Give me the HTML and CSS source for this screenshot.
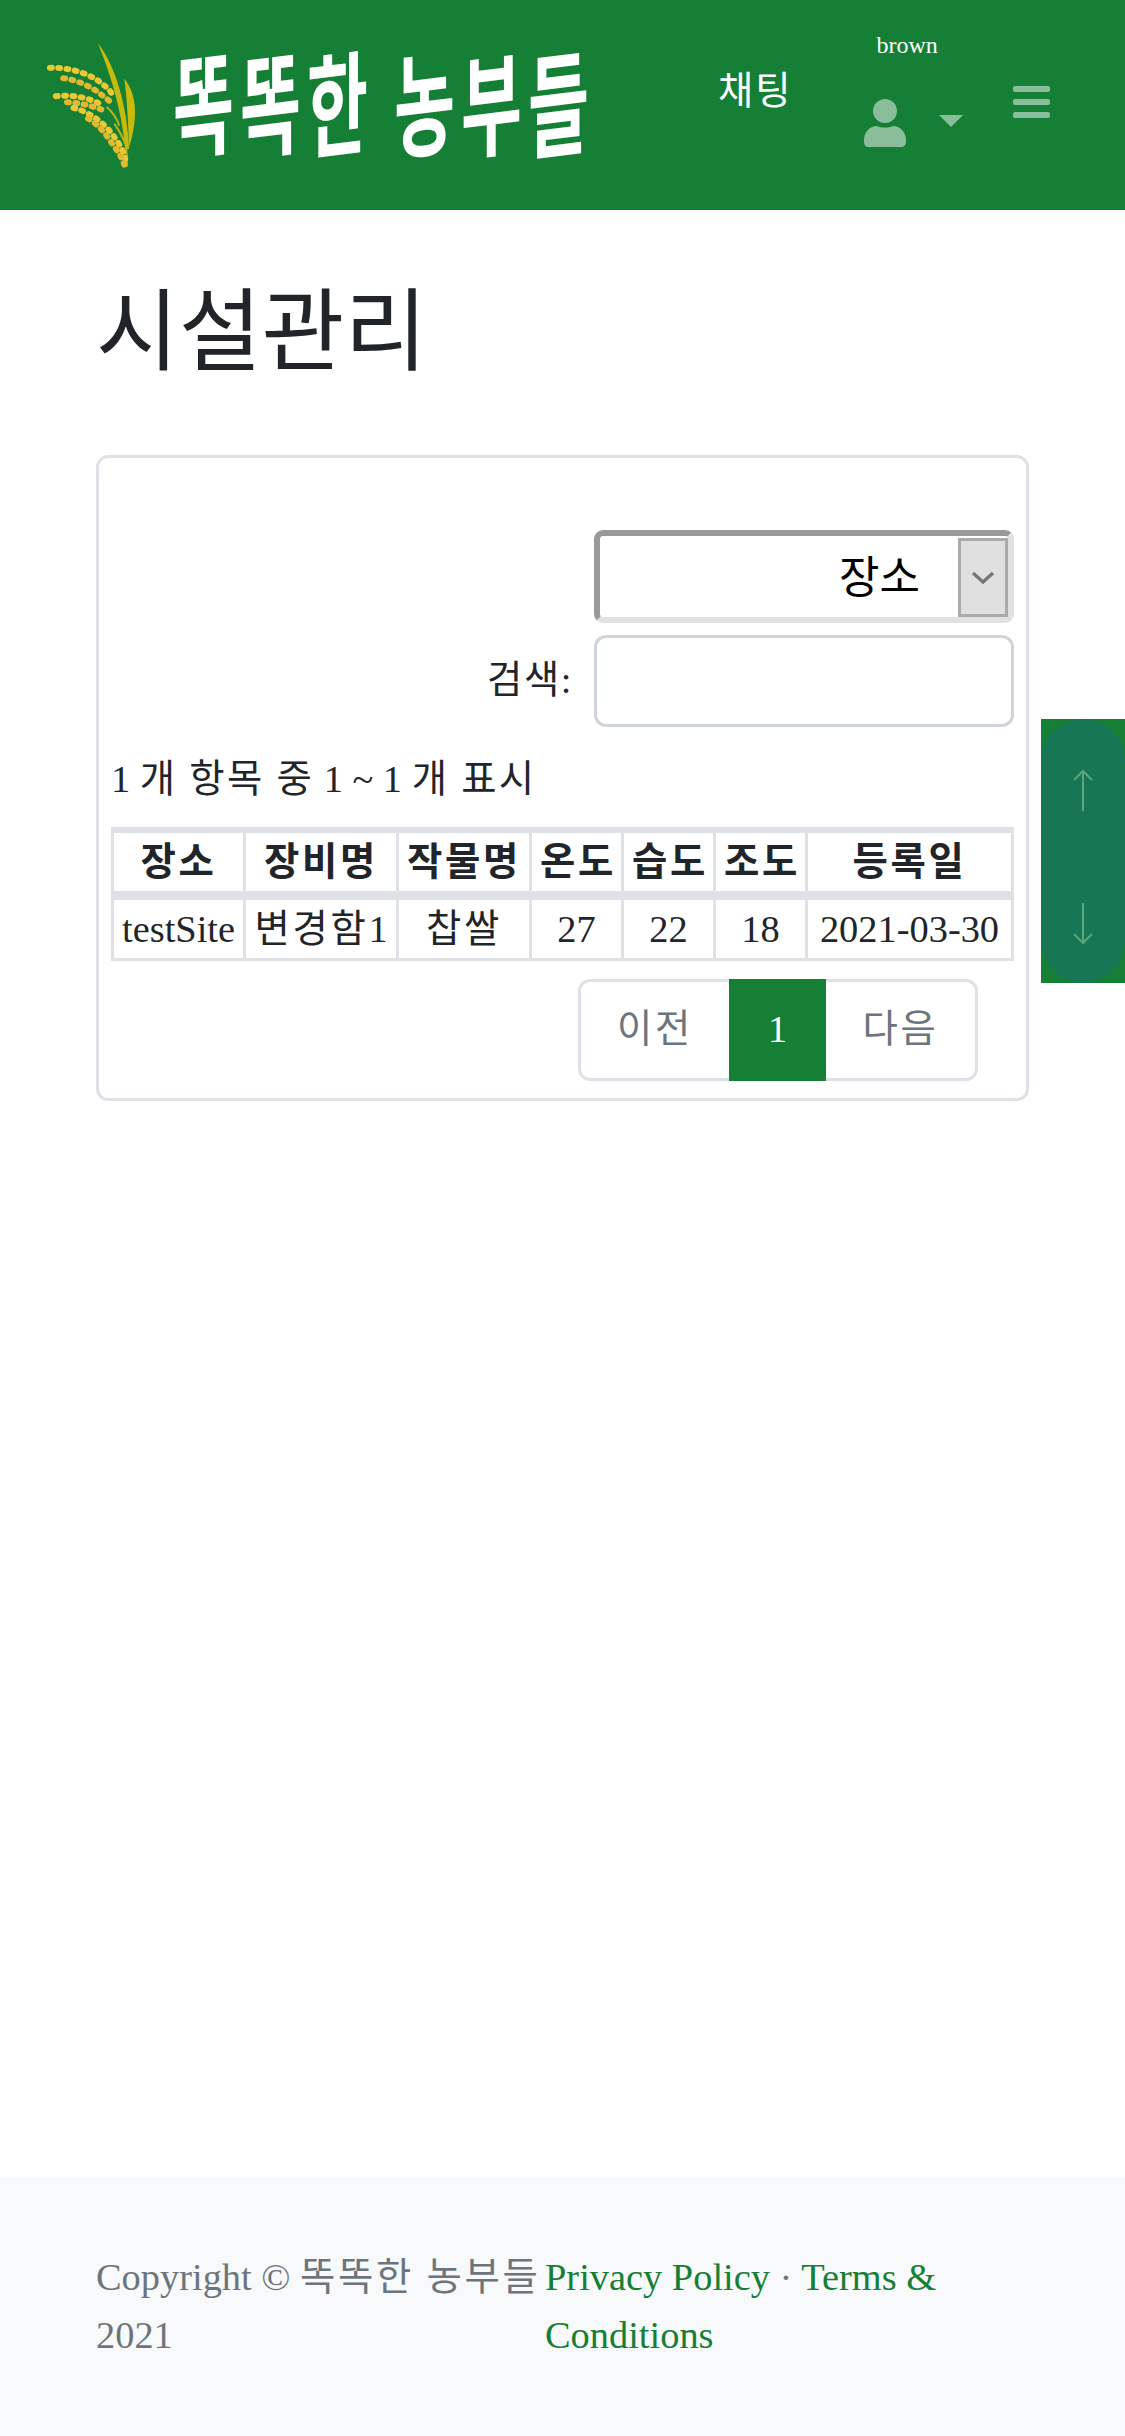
FILE: index.html
```html
<!DOCTYPE html>
<html lang="ko">
<head>
    <meta charset="UTF-8">
    <meta name="viewport" content="width=device-width, initial-scale=1.0">
    <title>시설관리</title>
    <link rel="stylesheet" href="styles.css">
</head>
<body>
    <nav class="navbar">
        <a class="brand" href="#">
            <svg class="brand-plant" width="90" height="128" viewBox="46 41 92 128">
                <path class="leaf" d="M99 42C118 66 129 108 131 150L127 150C123 110 113 76 99 42Z"/>
                <path class="leaf" d="M126 78C134 88 137 100 137 112C137 126 134 138 131 148C130 125 129 100 126 78Z"/>
                <path class="stem" d="M128 147L129 168M116 124C120 130 124 136 127 145M108 107C114 112 118 118 121 126"/>
                <path class="ear" d="M50 67C70 66 94 74 104 84C110 88 113 92 115 97"/>
                <path class="ear alt" d="M58 77C76 78 92 86 102 94C106 97 110 100 113 103"/>
                <path class="ear" d="M56 96C74 94 92 98 105 106"/>
                <path class="ear alt" d="M62 102C76 102 92 105 106 111"/>
                <path class="ear" d="M74 108C92 112 108 126 116 138C122 146 125 152 127 160"/>
                <path class="ear alt" d="M84 116C98 123 106 133 114 145C120 153 123 158 126 166"/>
            </svg>
            <span class="brand-text"><span>똑</span><span>똑</span><span>한</span><span class="gap">농</span><span>부</span><span>들</span></span>
        </a>
        <a class="nav-chat" href="#">채팅</a>
        <div class="nav-user">
            <span class="user-name">brown</span>
            <div class="user-icons">
                <svg class="user-icon" width="42" height="48" viewBox="0 0 42 48">
                    <circle cx="21" cy="12" r="12"/>
                    <path d="M0 41C0 33 6 27 13 27C18 29 24 29 29 27C36 27 42 33 42 41V43C42 46 40 48 37 48H5C2 48 0 46 0 43Z"/>
                </svg>
                <span class="caret"></span>
            </div>
        </div>
        <button class="nav-toggle"><span></span><span></span><span></span></button>
    </nav>

    <main class="content">
        <h1>시설관리</h1>
        <div class="card">
            <div class="filter-row">
                <div class="fake-select">
                    <span class="select-value">장소</span>
                    <span class="select-btn">
                        <svg width="26" height="16" viewBox="0 0 26 16"><path d="M3 3L13 12L23 3"/></svg>
                    </span>
                </div>
            </div>
            <div class="filter-row search-row">
                <label for="search">검색:</label>
                <input type="text" id="search">
            </div>
            <p class="info">1 <span class="ko">개 항목 중</span> 1 ~ 1 <span class="ko">개 표시</span></p>
            <table class="data-table">
                <colgroup>
                    <col class="col-site"><col class="col-gear"><col class="col-crop">
                    <col class="col-num"><col class="col-num"><col class="col-num">
                    <col class="col-date">
                </colgroup>
                <thead>
                    <tr><th>장소</th><th>장비명</th><th>작물명</th><th>온도</th><th>습도</th><th>조도</th><th>등록일</th></tr>
                </thead>
                <tbody>
                    <tr><td>testSite</td><td><span class="ko">변경함</span>1</td><td class="ko">찹쌀</td><td>27</td><td>22</td><td>18</td><td>2021-03-30</td></tr>
                </tbody>
            </table>
            <div class="pager">
                <a class="page prev ko" href="#">이전</a>
                <a class="page active" href="#">1</a>
                <a class="page next ko" href="#">다음</a>
            </div>
        </div>
    </main>

    <div class="scroll-box">
        <div class="scroll-inner">
            <svg width="20" height="42" viewBox="0 0 20 42"><path d="M10 41V1M1 10L10 1L19 10"/></svg>
            <svg width="20" height="42" viewBox="0 0 20 42"><path d="M10 1V41M1 32L10 41L19 32"/></svg>
        </div>
    </div>

    <footer class="footer">
        <div class="copy">Copyright © <span class="ko">똑똑한 농부들</span> 2021</div>
        <div class="links"><a href="#">Privacy Policy</a> · <a href="#">Terms &amp; Conditions</a></div>
    </footer>
</body>
</html>
```

FILE: styles.css
```css
*{
  box-sizing:border-box;
}
html,body{
  margin:0;
  height:100%;
}
body{
  display:flex;
  flex-direction:column;
  min-height:2436px;
  font-family:"Liberation Serif","Noto Sans CJK KR",serif;
  font-size:38.4px;
  line-height:1.5;
  color:#212529;
  background:#fff;
}
a{
  text-decoration:none;
}
.ko{
  letter-spacing:.07em;
}

/* top bar */
.navbar{
  display:flex;
  align-items:flex-start;
  height:210px;
  padding-left:46px;
  background-color:#157f36;
  color:#fff;
}
.brand{
  display:flex;
  align-items:center;
  margin-top:41px;
  color:#fff;
}
.brand-plant .leaf{
  fill:#c8ba0a;
}
.brand-plant .stem{
  fill:none;
  stroke:#b9b020;
  stroke-width:2;
}
.brand-plant .ear{
  fill:none;
  stroke:#ecc832;
  stroke-width:6;
  stroke-linecap:round;
  stroke-dasharray:2 6.5;
}
.brand-plant .ear.alt{
  stroke:#e2b92e;
  stroke-dashoffset:3;
}
.brand-text{
  display:flex;
  margin-left:34px;
  margin-top:-12px;
  font-family:"Noto Sans CJK KR",sans-serif;
  font-size:72px;
  font-weight:700;
  line-height:116px;
}
.brand-text span{
  display:block;
  width:67px;
  text-align:center;
  transform:skewY(-7deg) scale(.92,1.55);
}
.brand-text .gap{
  margin-left:20px;
}
.nav-chat{
  margin-left:126px;
  margin-top:63px;
  color:#fff;
  letter-spacing:2px;
}
.nav-user{
  display:flex;
  flex-direction:column;
  align-items:center;
  width:98px;
  margin-left:70px;
  margin-top:28px;
}
.user-name{
  margin-right:9px;
  font-size:24px;
  line-height:34px;
}
.user-icons{
  display:flex;
  align-items:flex-start;
  margin-top:37px;
}
.user-icon{
  margin-left:3px;
  fill:#8abe9b;
}
.caret{
  margin-top:16px;
  margin-left:33px;
  border-top:12px solid #8abe9b;
  border-left:12px solid transparent;
  border-right:12px solid transparent;
}
.nav-toggle{
  display:flex;
  flex-direction:column;
  gap:7px;
  width:37px;
  margin-left:52px;
  margin-top:86px;
  padding:0;
  border:0;
  background:none;
}
.nav-toggle span{
  display:block;
  height:6px;
  border-radius:2px;
  background-color:#8abe9b;
}

/* page body */
.content{
  flex:1;
  padding:57px 96px 0;
}
h1{
  margin:0 0 73px;
  font-family:"Noto Sans CJK KR",sans-serif;
  font-size:90px;
  font-weight:400;
  line-height:115px;
}
.card{
  height:646px;
  padding:72px 12px 0 12px;
  border:3px solid #dee2e6;
  border-radius:12px;
}
.filter-row{
  display:flex;
  justify-content:flex-end;
}
.fake-select{
  display:flex;
  justify-content:flex-end;
  width:420px;
  height:93px;
  border-style:solid;
  border-width:6px;
  border-color:#999 #e2e2e2 #e2e2e2 #999;
  border-radius:9px;
  font-family:"Noto Sans CJK KR",sans-serif;
  color:#000;
  font-size:44px;
  line-height:76px;
}
.select-value{
  margin-right:38px;
}
.select-btn{
  display:flex;
  align-items:center;
  justify-content:center;
  width:50px;
  margin:2px 0 0;
  border:3px solid #aaa;
  background-color:#e0e0e0;
}
.select-btn svg{
  fill:none;
  stroke:#777;
  stroke-width:3.5;
}
.search-row{
  align-items:center;
  margin-top:12px;
}
.search-row label{
  margin-right:21px;
  letter-spacing:.04em;
}
.search-row input{
  width:420px;
  height:92px;
  border:3px solid #ced4da;
  border-radius:12px;
  background:#fff;
}
.info{
  margin:21px 0 0;
  height:57px;
  line-height:57px;
  white-space:nowrap;
  padding-top:3px;
}
.info .ko{
  letter-spacing:.06em;
}
.data-table{
  table-layout:fixed;
  width:100%;
  margin-top:22px;
  border-collapse:collapse;
  border-top:6px solid #dee2e6;
  text-align:center;
  white-space:nowrap;
}
.col-site{
  width:132px;
}
.col-gear{
  width:153px;
}
.col-crop{
  width:133px;
}
.col-num{
  width:92px;
}
.data-table th,.data-table td{
  padding:0 8px;
  border:3px solid #dee2e6;
  line-height:58px;
}
.data-table th{
  border-top:0;
  border-bottom-width:9px;
  font-weight:700;
  letter-spacing:.07em;
}
.pager{
  display:flex;
  justify-content:flex-end;
  margin-top:18px;
  padding-right:36px;
  height:102px;
}
.page{
  display:flex;
  align-items:center;
  justify-content:center;
  border:3px solid #dee2e6;
  color:#6c757d;
}
.page.prev{
  width:151px;
  border-right:0;
  border-radius:12px 0 0 12px;
}
.page.active{
  width:97px;
  border:0;
  background-color:#157f36;
  color:#fff;
}
.page.next{
  width:152px;
  border-left:0;
  border-radius:0 12px 12px 0;
}

/* floating up/down buttons */
.scroll-box{
  position:absolute;
  top:719px;
  right:0;
  width:84px;
  height:264px;
  background-color:#157f36;
}
.scroll-inner{
  display:flex;
  flex-direction:column;
  align-items:center;
  gap:90px;
  height:100%;
  padding-top:51px;
  border-radius:42px;
  background-color:#177755;
}
.scroll-inner svg{
  fill:none;
  stroke:#5aa87a;
  stroke-width:2;
}

.footer{
  display:grid;
  grid-template-columns:449px 1fr;
  height:259px;
  padding:72px 96px 0;
  background-color:#f8f9fa;
  color:#6c757d;
}
.links a{
  color:#157f36;
}
```
